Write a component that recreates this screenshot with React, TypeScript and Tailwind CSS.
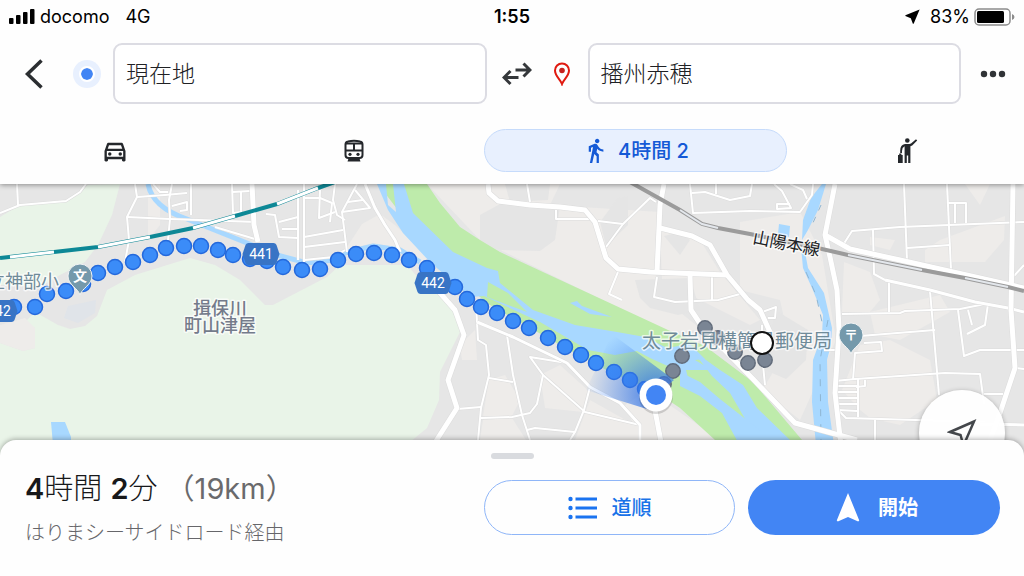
import type { ReactNode } from "react";
import {
  MdDirectionsWalk,
  MdNavigation,
  MdNearMe,
  MdOutlineDirectionsCar,
} from "react-icons/md";

type Point = [number, number];

const routeDots: Point[] = [
  [14, 307], [35, 307], [47, 294], [66, 291], [83, 284], [98, 273], [115, 267],
  [133, 262], [150, 255], [166, 248], [184, 246], [201, 246], [218, 250],
  [233, 255], [250, 259], [267, 261], [283, 267], [302, 270], [320, 269],
  [338, 260], [356, 254], [374, 253], [392, 255], [409, 260], [427, 268],
  [455, 287], [467, 299], [481, 307], [497, 313], [513, 321], [529, 328],
  [548, 338], [565, 347], [581, 355], [596, 363], [614, 372], [630, 380],
  [645, 389],
];

const passedDots: Point[] = [
  [664, 384], [673, 371], [682, 356], [705, 328], [718, 338], [735, 352],
  [748, 363], [765, 360],
];

const lightGreen = [
  "0,217 20,205 66,201 88,185 120,184 112,215 98,245 85,262 60,275 40,287 0,285",
  "0,343 23,351 35,348 35,328 25,322 35,312 58,325 70,329 85,326 97,316 107,290 135,275 190,258 215,265 240,280 265,305 273,305 327,277 340,265 407,265 420,280 440,295 458,310 462,328 440,372 439,400 427,428 410,442 410,470 0,470",
];

const paleAreas = [
  "0,325 25,318 35,328 35,348 23,351 0,343",
  "427,184 560,184 550,205 660,212 655,292 702,330 668,332 480,240",
  "345,250 362,224 380,214 395,225 440,268 425,265 400,248 373,243",
  "148,184 160,184 160,225 148,240",
  "660,230 700,240 720,272 760,320 750,325 700,300 662,280",
  "740,222 800,212 812,235 822,255 836,340 800,420 762,390 790,345 780,300 740,290",
  "844,262 870,272 880,300 870,312 842,312",
  "870,237 895,240 890,250 870,245",
  "925,250 940,240 1005,216 1004,240 985,262 925,262",
  "965,184 990,184 980,205",
  "842,390 860,345 890,340 930,360 937,400 900,425 870,418 860,410",
  "870,312 940,295 950,312 900,340 875,335",
  "489,380 505,375 520,400 512,416 483,416",
  "540,375 560,365 590,392 583,412 545,408",
  "483,420 512,418 526,440 480,440",
  "590,400 640,428 640,440 575,440",
  "460,345 475,330 477,360 462,360",
  "648,390 720,440 640,440 625,405",
];

const greyAreas = [
  "480,215 500,204 560,206 555,240 540,251 500,250 480,242",
  "505,184 550,184 548,200 510,202",
  "600,222 618,198 628,196 628,225 606,246",
  "635,280 690,278 700,310 678,315 650,308 640,298",
  "664,236 680,255 690,240 680,232",
  "775,310 808,330 806,360 786,379 765,370",
];

const minorRoads = [
  "0,213 20,205 66,201 80,192 86,184",
  "18,205 17,184",
  "135,184 137,197 127,217 129,240 125,262",
  "137,197 165,195 187,193",
  "127,217 170,219 256,222",
  "172,184 169,200 170,219 168,240",
  "153,184 160,192 168,192",
  "191,184 191,215",
  "172,206 187,202 187,210 180,211",
  "232,184 233,213 241,212 241,192",
  "233,192 250,191",
  "215,227 255,239",
  "298,190 298,260",
  "304,184 304,262",
  "266,214 275,215 279,237 298,238",
  "279,222 298,217",
  "282,229 298,229",
  "304,260 333,257 345,250",
  "320,190 319,218 335,212",
  "304,198 320,198 332,203 330,222",
  "335,184 333,200 337,215 345,220",
  "304,237 343,230",
  "304,247 345,242",
  "357,184 342,212 347,252",
  "342,212 370,208 355,190",
  "348,202 363,200",
  "527,184 530,202",
  "556,210 556,219 590,219",
  "598,221 623,224 606,247",
  "623,224 650,198 656,202",
  "618,272 609,294 622,300",
  "657,277 654,297 675,302 718,300 740,294",
  "712,277 712,300",
  "690,184 693,213 750,211 800,212 812,195 813,184",
  "692,193 705,192 730,200 750,196 752,184",
  "716,184 716,194",
  "774,184 782,191 791,208 777,209 777,204 790,204",
  "790,184 803,190 807,199",
  "843,245 852,231 900,227 1024,222",
  "904,184 907,261",
  "947,184 951,270",
  "947,203 966,203 966,223",
  "955,203 955,223",
  "907,248 950,245",
  "873,230 874,274 885,280 889,281 889,312",
  "842,314 900,313 905,311 960,309 985,304",
  "930,291 939,395",
  "958,310 964,356 980,350 1024,350",
  "967,334 985,325 988,304",
  "968,310 972,325",
  "1024,265 1014,276",
  "860,336 935,330",
  "864,343 881,342 882,351 855,353 853,380",
  "835,381 855,379 945,373 980,374 984,404",
  "858,379 858,417",
  "865,380 865,386 856,387",
  "838,386 857,386",
  "838,392 857,392",
  "838,398 857,398",
  "838,404 857,404",
  "838,410 857,411",
  "838,410 846,418 985,422",
  "875,420 875,460",
  "984,394 1003,394",
  "1015,368 1024,369",
  "762,312 776,307 775,318 768,318",
  "762,325 762,355 765,385",
  "824,350 836,350",
  "476,305 477,322 478,340 486,345 489,375 481,408 478,440",
  "507,335 513,375 522,415 530,440",
  "489,378 513,382",
  "457,409 481,407",
  "481,418 512,417 530,413 537,404 543,375 530,357 567,363",
  "543,375 585,412 640,425",
  "590,387 584,410 575,432 570,440",
  "527,430 535,428 575,432",
];

const mediumRoads = [
  "365,184 375,208 385,225 395,240 400,252",
  "477,322 513,337 567,363 590,387 620,403 640,425 640,440",
  "885,280 930,290 975,302 1008,308 1024,312",
  "980,424 1024,425",
];

const majorRoads = [
  "252,184 254,225 258,242",
  "488,184 489,193 498,201 530,205 560,207 585,210 595,222 606,258 618,269 650,272 727,275",
  "664,184 660,205 657,272",
  "660,228 692,236 710,245 727,275 748,300 760,310 770,332",
  "690,275 691,310 703,328 753,379 795,423 857,440",
  "835,184 825,235 830,257 837,290 839,330 835,393 841,445",
  "825,235 850,249 900,260 1024,288",
  "1013,184 1011,310 1015,368 1000,413 990,440",
  "420,272 440,293 455,310 464,335 448,380 457,408 436,441",
  "654,405 661,442",
];

const water = [
  "377,184 386,184 388,205 396,212 393,184 404,184 413,213 453,252 487,268 498,271 500,283 533,310 575,325 617,332 645,337 667,348 690,344 705,359 695,360 712,370 686,370 690,386 672,368 650,358 637,351 615,355 588,350 540,322 484,296 470,297 430,262 403,233 388,210",
  "692,350 720,370 743,385 757,408 790,440 795,460 765,460 748,424 730,393 712,376",
  "680,372 700,382 720,399 757,428 780,446 740,446 722,413 700,396 680,386",
  "570,303 577,301 582,306 612,317 590,314",
  "822,184 826,184 818,210 808,230 802,240 803,220 811,198",
  "801,247 805,252 808,268 824,293 832,328 831,345 827,360 828,402 834,445 816,445 812,402 813,360 822,335 823,315 812,288 803,268",
  "779,224 790,226 789,237 778,234",
  "51,422 65,422 71,437 71,445 53,445",
];

function Lines({ lines, width }: { lines: string[]; width: number }) {
  return (
    <>
      <g fill="none" stroke="#dcdcdc" strokeWidth={width + 1} strokeLinejoin="round">
        {lines.map((l) => (
          <polyline key={l} points={l} />
        ))}
      </g>
      <g fill="none" stroke="#fff" strokeWidth={width} strokeLinejoin="round">
        {lines.map((l) => (
          <polyline key={l} points={l} />
        ))}
      </g>
    </>
  );
}

function Shapes({ shapes, fill }: { shapes: string[]; fill: string }) {
  return (
    <g fill={fill}>
      {shapes.map((s) => (
        <polygon key={s} points={s} />
      ))}
    </g>
  );
}

function RoadShield({ x, y, label }: { x: number; y: number; label: string }) {
  return (
    <g transform={`translate(${x} ${y})`}>
      <path
        d="M-12.500-11H12.500Q14.500-11 15.500-9L18.500 0 15.500 9Q14.500 11 12.500 11H-12.500Q-14.500 11-15.500 9L-18.500 0-15.500-9Q-14.500-11-12.500-11Z"
        fill="#3874c5"
      />
      <text y="5" textAnchor="middle" fontSize="14" fill="#fff" className="font-['Roboto',sans-serif]">
        {label}
      </text>
    </g>
  );
}

function PlacePin({ x, y, label }: { x: number; y: number; label: string }) {
  return (
    <g transform={`translate(${x} ${y})`}>
      <path
        d="M0 18C-2 11-12 8-12-1A12 12 0 1 1 12-1C12 8 2 11 0 18Z"
        fill="#7499ab"
        stroke="#f1f3f4"
        strokeWidth="1"
      />
      <text y="4" textAnchor="middle" fontSize="14" fontWeight="700" fill="#fff">
        {label}
      </text>
    </g>
  );
}

function RouteMap() {
  return (
    <svg
      viewBox="0 184 1024 276"
      preserveAspectRatio="xMidYMin slice"
      className="block h-full w-full font-['Noto_Sans_CJK_JP',sans-serif]"
      role="img"
      aria-label="経路の地図"
    >
      <defs>
        <radialGradient id="beam" gradientUnits="userSpaceOnUse" cx="656" cy="395" r="72">
          <stop offset="0" stopColor="#2f6fe0" stopOpacity="0.9" />
          <stop offset="1" stopColor="#4285f4" stopOpacity="0" />
        </radialGradient>
      </defs>
      <rect y="184" width="1024" height="276" fill="#e6e6e6" />
      <Shapes shapes={lightGreen} fill="#e9f4e8" />
      <Shapes shapes={paleAreas} fill="#eeecea" />
      <Shapes shapes={greyAreas} fill="#e5e5e5" />
      <polygon points="68,306 96,300 95,313 78,323 64,318" fill="#e0e4e9" />
      <polygon
        points="378,184 427,184 440,203 460,227 480,240 500,252 668,330 705,346 753,382 802,440 810,460 740,460 715,440 680,408 656,392 610,372 560,345 490,305 440,265"
        fill="#beebab"
      />
      <Shapes shapes={water} fill="#a8d8ff" />
      <polygon points="488,282 508,293 527,312 487,297" fill="#beebab" />
      <path
        d="M148 184C152 205 172 214 187 219L247 243 277 255 307 263 333 260 347 252 373 246 400 250 420 262"
        fill="none"
        stroke="#a8d8ff"
        strokeWidth="5"
      />
      <polyline points="821,205 812,225" fill="none" stroke="#8fb6d3" strokeDasharray="6 7" />
      <polyline points="806,272 816,295 822,322" fill="none" stroke="#8fb6d3" strokeDasharray="7 8" />
      <polyline points="828,320 820,360 821,440" fill="none" stroke="#8fb6d3" strokeDasharray="7 8" />

      <Lines lines={minorRoads} width={2} />
      <Lines lines={mediumRoads} width={3} />
      <Lines lines={majorRoads} width={5} />

      {/* railways */}
      <g fill="none">
        <polyline
          points="0,258 54,252 98,247 150,237 193,228 235,216 277,204 318,188 335,182"
          stroke="#0d8896"
          strokeWidth="4"
        />
        <path
          d="M10 257L54 252M98 247L150 237M193 228L235 216M277 204L318 188"
          stroke="#fff"
          strokeWidth="3"
        />
        <polyline
          points="630,182 680,210 702,224 718,228 750,234 822,249 848,255 922,270 965,278 1008,287 1024,291"
          stroke="#9b9b9b"
          strokeWidth="4"
        />
        <path
          d="M680 210L702 224 718 228M848 255L922 270M965 278L1008 287"
          stroke="#e3e7ec"
          strokeWidth="2"
        />
      </g>

      <g fill="#3b8cf8" stroke="#2469dc" strokeWidth="1.500">
        {routeDots.map(([x, y]) => (
          <circle key={`${x}-${y}`} cx={x} cy={y} r="7.500" />
        ))}
      </g>
      <g fill="#7a8594" stroke="#626c7b" strokeWidth="1.500">
        {passedDots.map(([x, y]) => (
          <circle key={`${x}-${y}`} cx={x} cy={y} r="7.200" />
        ))}
      </g>

      <RoadShield x={261} y={254} label="441" />
      <RoadShield x={433} y={283} label="442" />
      <RoadShield x={-1} y={311} label="442" />

      <g paintOrder="stroke" stroke="#fff" strokeOpacity="0.7" strokeWidth="3" strokeLinejoin="round">
        <text x="59" y="288" textAnchor="end" fontSize="18" fill="#6f8b99">
          市立神部小
        </text>
        <text fontSize="18" fontWeight="500" fill="#747b8b" textAnchor="middle">
          <tspan x="220" y="315">揖保川</tspan>
          <tspan x="220" y="332">町山津屋</tspan>
        </text>
        <text x="642" y="348" fontSize="19" fill="#6f8b99">
          太子岩見構簡易郵便局
        </text>
        <text
          transform="translate(752 243) rotate(11)"
          fontSize="17"
          fill="#202124"
        >
          山陽本線
        </text>
      </g>

      <PlacePin x={80} y={277} label="文" />
      <PlacePin x={851} y={336} label="〒" />

      <polygon points="656,395 674,380 612,334 586,390 650,410" fill="url(#beam)" />
      <circle cx="656" cy="397" r="17" fill="#000" opacity="0.150" />
      <circle cx="656" cy="395" r="16.500" fill="#fff" />
      <circle cx="656" cy="395" r="10" fill="#4285f4" />
      <circle cx="762" cy="343" r="11" fill="#fff" stroke="#111" strokeWidth="2" />
    </svg>
  );
}

function StatusBar() {
  return (
    <div className="flex h-[33px] items-center px-2 font-['Inter',sans-serif] text-lg text-black">
      <div className="flex flex-1 items-center">
        <svg width="28" height="16" viewBox="0 0 28 16" className="mr-1 shrink-0" aria-hidden="true">
          <rect x="1" y="9" width="4.500" height="6" rx="1" />
          <rect x="8" y="6" width="4.500" height="9" rx="1" />
          <rect x="15" y="3" width="4.500" height="12" rx="1" />
          <rect x="22" y="0" width="4.500" height="15" rx="1" />
        </svg>
        <span>docomo</span>
        <span className="ml-4">4G</span>
      </div>
      <time className="font-semibold">1:55</time>
      <div className="flex flex-1 items-center justify-end">
        <MdNearMe size={19} className="mr-2" />
        <span>83%</span>
        <svg width="42" height="18" viewBox="0 0 42 18" className="ml-1 shrink-0" aria-hidden="true">
          <rect x="1" y="1" width="35" height="16" rx="4" fill="none" stroke="#8c8c8c" strokeWidth="1.500" />
          <rect x="3" y="3" width="27" height="12" rx="1.500" />
          <path d="M38 6Q40.500 7 40.500 9T38 12Z" fill="#8c8c8c" />
        </svg>
      </div>
    </div>
  );
}

function TrainIcon() {
  return (
    <svg width="22" height="24" viewBox="0 0 22 24" fill="none" stroke="currentColor" strokeWidth="2">
      <path d="M5 2.500Q11 1 17 2.500Q19.500 3 19.500 5.500V16Q19.500 19 16.500 19H5.500Q2.500 19 2.500 16V5.500Q2.500 3 5 2.500Z" />
      <path d="M3 4.500H19M3 11.500H19M11 4.500V11.500" />
      <circle cx="7" cy="15.300" r="1.600" fill="currentColor" stroke="none" />
      <circle cx="15" cy="15.300" r="1.600" fill="currentColor" stroke="none" />
      <path d="M5.500 19.500L4.500 22.500H17.500L16.500 19.500Z" fill="currentColor" stroke="none" />
    </svg>
  );
}

function HailIcon() {
  return (
    <svg width="22" height="26" viewBox="0 0 22 26" fill="currentColor">
      <circle cx="11.300" cy="2.500" r="2.300" />
      <path d="M9 6H13.500L15 5.600 20 1.200 21.200 2.500 16.200 7.400 14.400 8.200V25H12.200V17.500H10.800V25H8.600V8.200Q6 9.500 6 13V15H4.200V12.500Q4.200 6.600 9 6Z" />
      <path d="M3.200 15.500H5.400V17H6.700V25H2V17H3.200Z" />
    </svg>
  );
}

interface SearchFieldProps {
  label: string;
  value: string;
}

function SearchField({ label, value }: SearchFieldProps) {
  return (
    <input
      type="text"
      aria-label={label}
      defaultValue={value}
      className="h-[61px] min-w-0 flex-1 rounded-[9px] border-2 border-[#dcdce3] bg-white px-[11px] pb-1 text-[23px] font-light text-[#202124] outline-none"
    />
  );
}

interface ModeButtonProps {
  label: string;
  active?: boolean;
  children: ReactNode;
}

function ModeButton({ label, active = false, children }: ModeButtonProps) {
  return (
    <button
      type="button"
      aria-label={label}
      aria-pressed={active}
      className={
        active
          ? "flex h-[43px] items-center justify-center gap-[9px] rounded-full border border-[#c6dbfb] bg-[#e8f0fe] text-[#1459d6]"
          : "flex h-[43px] items-center justify-center rounded-full text-[#24272b]"
      }
    >
      {children}
    </button>
  );
}

export default function App() {
  return (
    <div className="flex h-screen flex-col overflow-hidden bg-white font-['Inter','Noto_Sans_CJK_JP',sans-serif]">
      <header className="relative z-10 shrink-0 bg-[#fefefe] pb-3 shadow-[0_1px_5px_rgba(0,0,0,0.4)]">
        <StatusBar />

        <div className="mt-2.5 flex items-center">
          <button type="button" aria-label="戻る" className="flex w-[60px] justify-center pl-2">
            <svg width="20" height="32" viewBox="0 0 20 32" fill="none" stroke="#2b2e31" strokeWidth="3.500">
              <path d="M17.500 2.500L3.500 16 17.500 29.500" />
            </svg>
          </button>
          <div className="flex w-[53px] justify-center">
            <span className="flex size-7 items-center justify-center rounded-full bg-[#e8f0fe]">
              <span className="size-4 rounded-full border-2 border-white bg-[#4285f4] bg-clip-padding" />
            </span>
          </div>
          <SearchField label="出発地" value="現在地" />
          <button type="button" aria-label="出発地と目的地を入れ替え" className="flex w-[60px] justify-center">
            <svg width="30" height="24" viewBox="0 0 30 24" fill="none" stroke="#35383b" strokeWidth="3">
              <path d="M13.500 8H28M21.500 1.500L28 8 21.500 14.500" />
              <path d="M16.500 15.500H2.500M8.500 9L2 15.500 8.500 22" />
            </svg>
          </button>
          <div className="flex w-[41px] justify-center pr-[10px]">
            <svg width="18" height="24" viewBox="0 0 18 24" fill="none" stroke="#e01a10" strokeWidth="2">
              <path d="M9 22C7.500 17.500 2 14 2 8.500A7 7 0 0 1 16 8.500C16 14 10.500 17.500 9 22Z" />
              <circle cx="9" cy="8.500" r="2.800" fill="#c5221f" stroke="none" />
            </svg>
          </div>
          <SearchField label="目的地" value="播州赤穂" />
          <button type="button" aria-label="メニュー" className="flex w-[63px] justify-center">
            <svg width="26" height="8" viewBox="0 0 26 8" fill="#303336">
              <circle cx="4" cy="4" r="3.200" />
              <circle cx="13" cy="4" r="3.200" />
              <circle cx="22" cy="4" r="3.200" />
            </svg>
          </button>
        </div>

        <div className="mt-[25px] grid grid-cols-[218fr_218fr_303fr_198fr] gap-[21px] pr-[18px] pl-1.5">
          <ModeButton label="車">
            <MdOutlineDirectionsCar size={28} />
          </ModeButton>
          <ModeButton label="電車">
            <TrainIcon />
          </ModeButton>
          <ModeButton label="徒歩 4時間 2" active>
            <MdDirectionsWalk size={27} />
            <span className="text-xl font-medium">4時間 2</span>
          </ModeButton>
          <ModeButton label="タクシー">
            <HailIcon />
          </ModeButton>
        </div>
      </header>

      <main className="relative min-h-0 flex-1">
        <RouteMap />
        <button
          type="button"
          aria-label="現在地を表示"
          className="absolute right-[19px] -bottom-4 flex size-[86px] items-center justify-center rounded-full bg-white/95 shadow-[0_1px_5px_rgba(0,0,0,0.3)]"
        >
          <svg width="30" height="30" viewBox="0 0 30 30" fill="none" stroke="#44474b" strokeWidth="2.500">
            <path d="M3 14L27 3.500 16.500 27.500 13.500 17Z" />
          </svg>
        </button>
      </main>

      <section className="relative z-10 -mt-5 shrink-0 rounded-t-2xl bg-[#fefefe] pt-[13px] pb-[41px] shadow-[0_-1px_5px_rgba(0,0,0,0.3)]">
        <div className="mx-auto h-1.5 w-[43px] rounded-full bg-[#d9dbdf]" />
        <div className="mt-[10px] grid grid-cols-[446fr_251fr_252fr] items-end gap-[13px] pr-6 pl-[25px]">
          <div className="-mb-3.5 whitespace-nowrap">
            <h1 className="text-[29px] leading-10 font-light text-[#17181a]">
              <span className="font-semibold">4</span>時間 <span className="font-semibold">2</span>分
              <span className="ml-2 font-normal text-[#6a6a6c]">（19km）</span>
            </h1>
            <p className="mt-2 text-xl leading-8 font-light text-[#66666a]">
              はりまシーサイドロード経由
            </p>
          </div>
          <button
            type="button"
            className="flex h-[55px] items-center justify-center gap-[15px] rounded-full border border-[#8fb6f8] text-xl font-medium text-[#1a73e8]"
          >
            <svg width="29" height="24" viewBox="0 0 29 24" fill="#1a73f0" aria-hidden="true">
              <circle cx="2.500" cy="3" r="2.200" />
              <circle cx="2.500" cy="12" r="2.200" />
              <circle cx="2.500" cy="21" r="2.200" />
              <path d="M7.500 1.500H29V4.500H7.500zM7.500 10.500H29V13.500H7.500zM7.500 19.500H29V22.500H7.500z" />
            </svg>
            道順
          </button>
          <button
            type="button"
            className="flex h-[55px] items-center justify-center gap-3 rounded-full bg-[#4285f4] text-xl font-semibold text-white"
          >
            <MdNavigation size={36} />
            開始
          </button>
        </div>
      </section>
    </div>
  );
}
